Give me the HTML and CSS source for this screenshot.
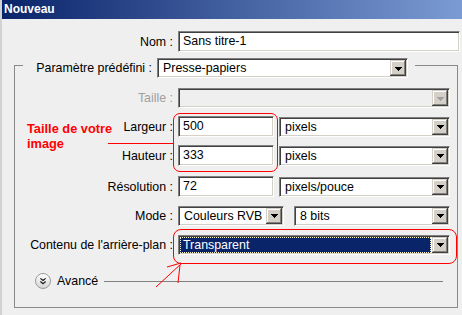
FILE: index.html
```html
<!DOCTYPE html>
<html lang="fr">
<head>
  <meta charset="UTF-8">
  <title>Nouveau</title>
  <link rel="stylesheet" href="styles.css">
</head>
<body>
  <div class="window">
    <div class="titlebar">Nouveau</div>

    <div class="name-row">
      <div class="label">Nom :</div>
      <div class="field wide">Sans titre-1</div>
    </div>

    <fieldset class="preset">
      <legend class="preset-head">
        <span class="label">Paramètre prédéfini :</span>
        <div class="select preset-select">
          <span class="value">Presse-papiers</span>
          <span class="drop"><svg width="7" height="4" shape-rendering="crispEdges"><path d="M0 0h7v1h-1v1h-1v1h-1v1h-1v-1h-1v-1h-1v-1h-1z"/></svg></span>
        </div>
      </legend>

      <div class="rows">
        <div class="row short">
          <div class="label disabled">Taille :</div>
          <div class="select full disabled">
            <span class="value"></span>
            <span class="drop"><svg width="7" height="4" shape-rendering="crispEdges"><path d="M0 0h7v1h-1v1h-1v1h-1v1h-1v-1h-1v-1h-1v-1h-1z"/></svg></span>
          </div>
        </div>

        <div class="row">
          <div class="label">Largeur :</div>
          <div class="field num">500</div>
          <div class="select unit">
            <span class="value">pixels</span>
            <span class="drop"><svg width="7" height="4" shape-rendering="crispEdges"><path d="M0 0h7v1h-1v1h-1v1h-1v1h-1v-1h-1v-1h-1v-1h-1z"/></svg></span>
          </div>
        </div>

        <div class="row">
          <div class="label">Hauteur :</div>
          <div class="field num">333</div>
          <div class="select unit">
            <span class="value">pixels</span>
            <span class="drop"><svg width="7" height="4" shape-rendering="crispEdges"><path d="M0 0h7v1h-1v1h-1v1h-1v1h-1v-1h-1v-1h-1v-1h-1z"/></svg></span>
          </div>
        </div>

        <div class="row spaced">
          <div class="label">Résolution :</div>
          <div class="field num">72</div>
          <div class="select unit">
            <span class="value">pixels/pouce</span>
            <span class="drop"><svg width="7" height="4" shape-rendering="crispEdges"><path d="M0 0h7v1h-1v1h-1v1h-1v1h-1v-1h-1v-1h-1v-1h-1z"/></svg></span>
          </div>
        </div>

        <div class="row">
          <div class="label">Mode :</div>
          <div class="select mode">
            <span class="value">Couleurs RVB</span>
            <span class="drop"><svg width="7" height="4" shape-rendering="crispEdges"><path d="M0 0h7v1h-1v1h-1v1h-1v1h-1v-1h-1v-1h-1v-1h-1z"/></svg></span>
          </div>
          <div class="select depth">
            <span class="value">8 bits</span>
            <span class="drop"><svg width="7" height="4" shape-rendering="crispEdges"><path d="M0 0h7v1h-1v1h-1v1h-1v1h-1v-1h-1v-1h-1v-1h-1z"/></svg></span>
          </div>
        </div>

        <div class="row">
          <div class="label">Contenu de l'arrière-plan :</div>
          <div class="select full focused">
            <span class="value">Transparent</span>
            <span class="drop"><svg width="7" height="4" shape-rendering="crispEdges"><path d="M0 0h7v1h-1v1h-1v1h-1v1h-1v-1h-1v-1h-1v-1h-1z"/></svg></span>
          </div>
        </div>

        <div class="advanced">
          <span class="toggle">
            <svg width="16" height="16" viewBox="0 0 16 16"><path d="M5 5l3 2.5 3-2.5M5 8.5l3 2.5 3-2.5" fill="none" stroke="#1a1a1a" stroke-width="1.4"/></svg>
          </span>
          <span class="adv-text">Avancé</span>
          <span class="rule"></span>
        </div>
      </div>
    </fieldset>

    <!-- annotations drawn over the dialog -->
    <div class="note-text">Taille de votre<br>image</div>
    <div class="note-line"></div>
    <div class="note-box size-box"></div>
    <div class="note-box bg-box"></div>
    <svg class="note-arrow" width="462" height="315">
      <path d="M156 287L182 263M167 267L181 263M178 283L180 265" stroke="#f00" stroke-width="1" fill="none"/>
    </svg>
  </div>
</body>
</html>
```

FILE: styles.css
```css
body {
  margin: 0;
  font-family: "Liberation Sans", Arial, sans-serif;
  font-size: 12.4px;
  color: #000;
  background: #efefef;
}
.window {
  position: relative;
  width: 462px;
  height: 315px;
  box-sizing: border-box;
  border-left: 2px solid #d2d2d2;
  background: #efefef;
  overflow: hidden;
}
.titlebar {
  height: 19px;
  line-height: 19px;
  padding-left: 2px;
  background: linear-gradient(90deg, #0a246a, #7b9bd4);
  color: #fff;
  font-size: 12px;
  font-weight: bold;
}

/* inputs */
.field,
.select {
  box-sizing: border-box;
  height: 21px;
  border: 1px solid;
  border-color: #808080 #fff #fff #808080;
  box-shadow: inset 1px 1px #404040, inset -1px -1px #d4d0c8;
  background: #fff;
}
.field {
  padding-left: 4px;
  line-height: 19px;
}
.select {
  display: flex;
  align-items: center;
  height: 20px;
  padding: 1px;
}
.select .value {
  flex: 1;
  height: 16px;
  line-height: 16px;
  padding-left: 4px;
  white-space: nowrap;
  overflow: hidden;
}
.drop {
  width: 16px;
  height: 16px;
  display: flex;
  align-items: center;
  justify-content: center;
  background: #d4d0c8;
  box-shadow: inset -1px -1px #404040, inset 1px 1px #d4d0c8, inset -2px -2px #808080, inset 2px 2px #fff;
}
.drop svg {
  margin-top: 1px;
}
.select.disabled {
  background: #efefef;
}
.select.disabled .drop path {
  fill: #a0a0a0;
}
.select.focused .value {
  margin-right: 1px;
  padding-left: 3px;
  background: #0a246a;
  color: #fff;
  outline: 1px dotted #fff6c8;
  outline-offset: -1px;
}

.name-row {
  display: flex;
  align-items: center;
  gap: 5px;
  margin-top: 12px;
}
.name-row .label {
  width: 171px;
  text-align: right;
}
.wide {
  width: 282px;
}

/* preset group */
.preset {
  margin: 6px 0 0 12px;
  padding: 0 0 18px 0;
  width: 444px;
  box-sizing: border-box;
  border: 1px solid #8a8a8a;
  min-width: 0;
}
.preset-head {
  display: flex;
  align-items: flex-start;
  gap: 5px;
  height: 14px;
  margin-left: 8px;
  padding: 0 7px 0 0;
}
.preset-head .label {
  width: 129px;
  line-height: 20px;
  text-align: right;
  white-space: nowrap;
}
.preset-select {
  width: 251px;
}

.rows {
  display: flex;
  flex-direction: column;
  gap: 8px;
  padding-top: 16px;
}
.row {
  display: flex;
  align-items: center;
  gap: 5px;
  height: 21px;
}
.row.short {
  height: 20px;
}
.row.spaced {
  margin-top: 2px;
}
.row .label {
  width: 158px;
  text-align: right;
  white-space: nowrap;
}
.label.disabled {
  color: #a0a0a0;
}
.full {
  width: 272px;
}
.num {
  width: 96px;
}
.unit {
  width: 171px;
}
.mode {
  width: 106px;
}
.depth {
  width: 156px;
  margin-left: 5px;
}

.advanced {
  display: flex;
  align-items: center;
  height: 16px;
  margin: 10px 0 0 20px;
}
.toggle {
  width: 16px;
  height: 16px;
  box-sizing: border-box;
  border: 1px solid #9a9a9a;
  border-radius: 50%;
  background: linear-gradient(#ffffff, #d6d6d6);
  display: flex;
  align-items: center;
  justify-content: center;
}
.toggle svg {
  width: 14px;
  height: 14px;
}
.adv-text {
  margin-left: 6px;
}
.rule {
  flex: 1;
  height: 1px;
  margin: 0 14px 0 6px;
  background: #808080;
}

/* red annotations */
.note-text {
  position: absolute;
  left: 25px;
  top: 121px;
  color: #f00;
  font-size: 12.8px;
  font-weight: bold;
  line-height: 15px;
}
.note-line {
  position: absolute;
  left: 106px;
  top: 143px;
  width: 65px;
  height: 1px;
  background: #f00;
}
.note-box {
  position: absolute;
  box-sizing: border-box;
  border: 1px solid #f00;
}
.size-box {
  left: 171px;
  top: 113px;
  width: 105px;
  height: 59px;
  border-radius: 7px;
}
.bg-box {
  left: 171px;
  top: 229px;
  width: 284px;
  height: 35px;
  border-radius: 8px;
}
.note-arrow {
  position: absolute;
  left: -2px;
  top: 0;
  pointer-events: none;
}
```
